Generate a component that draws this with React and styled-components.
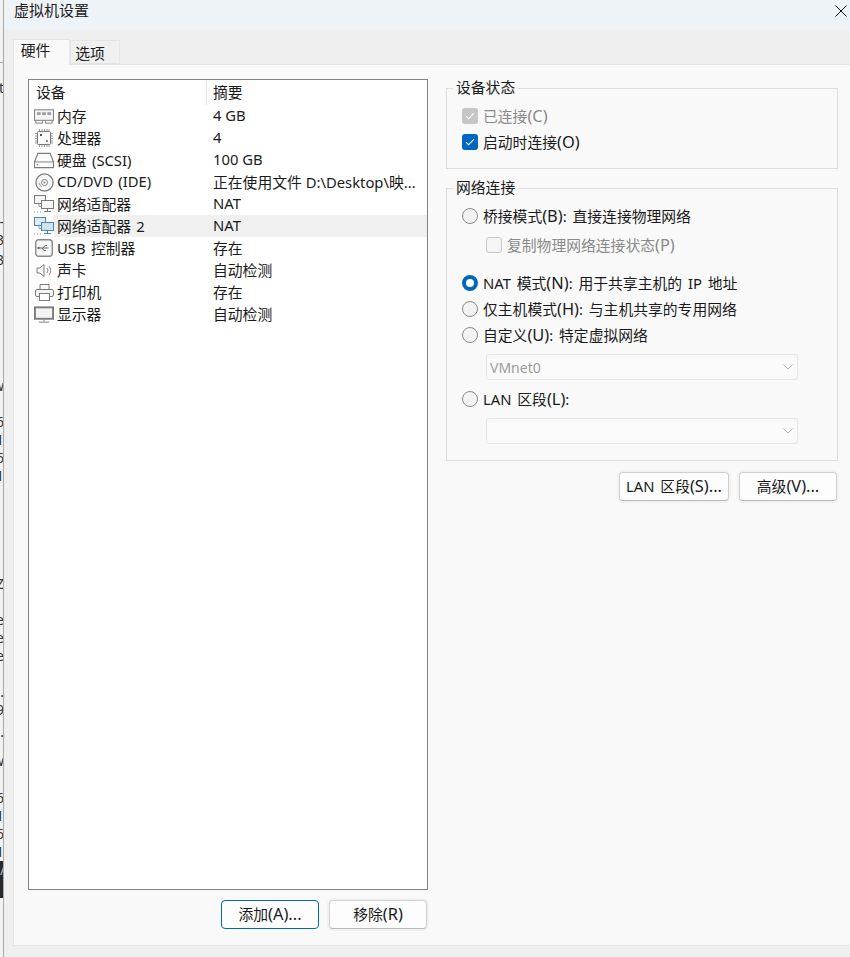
import React from 'react';
import styled, { createGlobalStyle } from 'styled-components';

const GlobalStyle = createGlobalStyle`
  html, body { margin: 0; padding: 0; background: #efefef; }
  body {
    font-family: "Noto Sans", "Noto Sans CJK SC", sans-serif;
    font-size: 14.8px;
    color: #1a1a1a;
  }
`;

const Screen = styled.div`
  display: flex;
  width: 850px;
  height: 957px;
  overflow: hidden;
`;

// sliver of the window behind the dialog
const BehindWindow = styled.div`
  width: 3px;
  flex: none;
  background: #f2f2f2;
  border-right: 1px solid #a9a9a9;
  overflow: hidden;
  display: flex;
  flex-direction: column;
  align-items: flex-end;
`;

const BehindLine = styled.div`
  width: 100%;
  height: 1px;
  flex: none;
  margin-top: 62px;
  background: #a9a9a9;
`;

const BehindChar = styled.div`
  height: 18px;
  flex: none;
  line-height: 18px;
  font-size: 14px;
  color: #333;
  margin-top: ${p => p.$gap || 0}px;
  margin-right: -1px;
  white-space: nowrap;
`;

const BehindDark = styled.div`
  width: 100%;
  height: 37px;
  flex: none;
  background: #25292b;
  color: #bbb;
  font-size: 14px;
  line-height: 18px;
  text-align: right;
`;

const Dialog = styled.div`
  flex: 1;
  min-width: 0;
  display: flex;
  flex-direction: column;
  background: #efefef;
`;

const TitleBar = styled.div`
  height: 30px;
  flex: none;
  display: flex;
  align-items: center;
  justify-content: space-between;
  padding: 0 3px 11px 10px;
  box-sizing: border-box;
  background: #eef3f8;
  font-size: 15px;
  color: #222;
`;

const CloseIcon = styled.svg`
  width: 12px;
  height: 12px;
  margin-top: 3px;
`;

const TabStrip = styled.div`
  height: 34px;
  flex: none;
  display: flex;
  align-items: flex-end;
  padding-left: 9px;
  box-sizing: border-box;
`;

const Tab = styled.div`
  box-sizing: border-box;
  display: flex;
  justify-content: center;
  align-items: flex-start;
  width: ${p => (p.$active ? 57 : 50)}px;
  height: ${p => (p.$active ? 26 : 24)}px;
  margin-bottom: ${p => (p.$active ? -1 : 0)}px;
  background: ${p => (p.$active ? '#f9f9f9' : '#f0f0f0')};
  border: 1px solid #e5e5e5;
  border-bottom: ${p => (p.$active ? 'none' : '1px solid #e5e5e5')};
  position: relative;
  line-height: 20px;
  padding-right: ${p => (p.$active ? 12 : 10)}px;
  padding-top: ${p => (p.$active ? 0 : 2)}px;
`;

const Panel = styled.div`
  flex: 1;
  margin-left: 9px;
  margin-bottom: 11px;
  padding: 14px 12px 0 14px;
  background: #f9f9f9;
  border: 1px solid #e5e5e5;
  border-right: none;
  display: grid;
  grid-template-columns: 400px 392px;
  column-gap: 18px;
  align-content: start;
`;

const LeftColumn = styled.div`
  display: flex;
  flex-direction: column;
`;

const DeviceList = styled.div`
  box-sizing: border-box;
  height: 811px;
  background: #fff;
  border: 1px solid #82838a;
`;

const ListHeader = styled.div`
  display: flex;
  height: 25px;
  align-items: center;
`;

const HeaderCell = styled.div`
  box-sizing: border-box;
  height: 100%;
  display: flex;
  align-items: center;
  padding: 0 0 2px ${p => p.$pad}px;
  width: ${p => p.$width}px;
  border-right: ${p => (p.$divider ? '1px solid #e5e5e5' : 'none')};
`;

const DeviceRow = styled.div`
  display: flex;
  height: 22px;
  align-items: center;
`;

const IconSlot = styled.div`
  width: 25px;
  height: 22px;
  flex: none;
  display: flex;
  align-items: center;
  justify-content: center;
  padding-left: 5px;
  box-sizing: border-box;
`;

const RowBody = styled.div`
  flex: 1;
  height: 100%;
  box-sizing: border-box;
  padding-bottom: 2px;
  display: flex;
  align-items: center;
  background: ${p => (p.$selected ? '#f0f0f0' : 'transparent')};
`;

const DeviceName = styled.div`
  width: 159px;
  padding-left: 3px;
  box-sizing: border-box;
  white-space: pre;
  word-spacing: 1.5px;
`;

const DeviceSummary = styled.div`
  flex: 1;
  min-width: 0;
  white-space: nowrap;
`;

const ButtonRow = styled.div`
  display: flex;
  justify-content: flex-end;
  gap: 10px;
  margin-top: ${p => p.$top}px;
  padding-right: 1px;
`;

const PushButton = styled.button`
  box-sizing: border-box;
  width: ${p => p.$width}px;
  height: 29px;
  padding: 0 0 2px;
  background: #fdfdfd;
  border: 1px solid ${p => (p.$focused ? '#0067c0' : '#d0d0d0')};
  border-bottom-color: ${p => (p.$focused ? '#0067c0' : '#b8b8b8')};
  border-radius: 4px;
  box-shadow: 0 0 0 2px ${p => (p.$focused ? 'transparent' : '#f1f1f1')};
  font: inherit;
  color: #1a1a1a;
  word-spacing: 2px;
  white-space: pre;
`;

const RightColumn = styled.div`
  display: flex;
  flex-direction: column;
  padding-top: 9px;
`;

const Group = styled.div`
  position: relative;
  box-sizing: border-box;
  height: ${p => p.$height}px;
  margin-bottom: ${p => p.$bottom || 0}px;
  padding: 14px 0 0 15px;
  border: 1px solid #dcdcdc;
  display: flex;
  flex-direction: column;
  align-items: flex-start;
`;

const Legend = styled.div`
  position: absolute;
  top: -12px;
  left: 6px;
  padding: 0 3px;
  background: #f9f9f9;
  line-height: 20px;
`;

const OptionRow = styled.div`
  display: flex;
  align-items: center;
  height: 26px;
  gap: 5px;
  margin-top: ${p => p.$top || 0}px;
  margin-left: ${p => p.$indent || 0}px;
  color: ${p => (p.$disabled ? '#8a8a8a' : '#1a1a1a')};
  white-space: pre;
  word-spacing: 2px;
`;

const OptionLabel = styled.span`
  margin-bottom: 2px;
`;

// accelerator such as (C): the original's Latin face runs wider than the CJK one
const Hotkey = styled.span`
  font-size: 16.4px;
`;

const CheckBox = styled.span`
  box-sizing: border-box;
  width: 16px;
  height: 16px;
  flex: none;
  border-radius: 3px;
  display: flex;
  align-items: center;
  justify-content: center;
  background: ${p => (p.$on ? (p.$disabled ? '#c6c6c6' : '#0067c0') : '#f5f5f5')};
  border: ${p => (p.$on ? 'none' : '1px solid #c8c8c8')};
`;

const Radio = styled.span`
  box-sizing: border-box;
  width: 16px;
  height: 16px;
  flex: none;
  border-radius: 50%;
  background: ${p => (p.$on ? '#fff' : '#f3f3f3')};
  border: ${p => (p.$on ? '4.5px solid #0067c0' : '1px solid #8a8a8a')};
`;

const DropDown = styled.div`
  box-sizing: border-box;
  width: 312px;
  height: 26px;
  margin: 6px 0 6px 24px;
  padding: 0 4px 0 3px;
  display: flex;
  align-items: center;
  justify-content: space-between;
  background: #fafafa;
  border: 1px solid #e6e6e6;
  border-radius: 3px;
  color: #9a9a9a;
  font-size: 14px;
`;

const Chevron = styled.svg`
  width: 10px;
  height: 6px;
  margin-left: auto;
`;

const G = '#7a7a7a';

const MemoryIcon = () => (
  <svg width="21" height="16" viewBox="0 0 21 16" fill="none">
    <rect x="0.5" y="1.5" width="20" height="11" fill="#f4f4f4" stroke={G} />
    <rect x="3" y="4" width="4" height="3" fill="#a0a0a0" />
    <rect x="8.5" y="4" width="4" height="3" fill="#a0a0a0" />
    <rect x="14" y="4" width="4" height="3" fill="#a0a0a0" />
    <path d="M2 12.5v3h7v-3M12 12.5v3h7v-3" stroke={G} />
  </svg>
);

const CpuIcon = () => (
  <svg width="18" height="18" viewBox="0 0 18 18" fill="none">
    <rect x="2.5" y="2.5" width="13" height="13" rx="1" fill="#fbfbfb" stroke={G} />
    <path d="M4.5 0v2M7 0v2M9.5 0v2M12 0v2M14 0v2M4.5 16v2M7 16v2M9.5 16v2M12 16v2M14 16v2M0 4.5h2M0 7h2M0 9.5h2M0 12h2M0 14h2M16 4.5h2M16 7h2M16 9.5h2M16 12h2M16 14h2" stroke="#9a9a9a" />
    <rect x="5" y="5" width="2" height="2" fill="#555" />
    <rect x="11" y="11" width="2" height="2" fill="#888" />
  </svg>
);

const DiskIcon = () => (
  <svg width="21" height="17" viewBox="0 0 21 17" fill="none">
    <path d="M4 1h13l3.5 9v6H.5v-6z" fill="#fbfbfb" stroke={G} strokeWidth="1.2" />
    <path d="M0.5 10h20" stroke={G} />
    <path d="M3 13h1.5" stroke="#444" />
  </svg>
);

const DiscIcon = () => (
  <svg width="19" height="19" viewBox="0 0 19 19" fill="none">
    <circle cx="9.5" cy="9.5" r="8.6" fill="#f6f6f6" stroke={G} strokeWidth="1.3" />
    <circle cx="9.5" cy="9.5" r="3" fill="#fff" stroke={G} />
    <circle cx="9.5" cy="9.5" r="1" fill={G} />
    <path d="M4 10a5.5 5.5 0 0 0 3 4" stroke="#999" />
  </svg>
);

const NetIcon = ({ $active }) => {
  const c = $active ? '#4a87b5' : G;
  return (
    <svg width="20" height="18" viewBox="0 0 20 18" fill="none">
      <rect x="0.5" y="0.5" width="11" height="8" fill={$active ? '#dfeaf3' : '#f6f6f6'} stroke={c} />
      <rect x="7.5" y="5.5" width="12" height="8" fill={$active ? '#cfe2f0' : '#f6f6f6'} stroke={c} />
      <path d="M13.5 13.5v3M10 16.5h7" stroke={c} />
      <path d="M5 8.5v3h2M0 17h1M3 17h1M6 17h1" stroke="#999" />
    </svg>
  );
};

const UsbIcon = () => (
  <svg width="18" height="18" viewBox="0 0 18 18" fill="none">
    <rect x="0.7" y="0.7" width="16.6" height="16.6" rx="3" fill="#f8f8f8" stroke="#888" strokeWidth="1.4" />
    <path d="M3.5 9h10M8 9l2-2.5h2M7 9l2 2.5h2" stroke="#666" />
    <circle cx="3.5" cy="9" r="1.2" fill="#666" />
  </svg>
);

const SpeakerIcon = () => (
  <svg width="17" height="15" viewBox="0 0 17 15" fill="none">
    <path d="M1 5h3l4-3.5v12L4 10H1z" fill="#fafafa" stroke={G} />
    <path d="M11 5a4 4 0 0 1 0 5M13 3a7 7 0 0 1 0 9" stroke="#888" />
  </svg>
);

const PrinterIcon = () => (
  <svg width="19" height="17" viewBox="0 0 19 17" fill="none">
    <path d="M5 5V0.5h9V5" fill="#fafafa" stroke={G} />
    <rect x="0.5" y="5.5" width="18" height="7" rx="1.5" fill="#f4f4f4" stroke={G} />
    <rect x="4.5" y="9.5" width="10" height="7" fill="#fff" stroke={G} />
  </svg>
);

const MonitorIcon = () => (
  <svg width="21" height="17" viewBox="0 0 21 17" fill="none">
    <rect x="1" y="1" width="19" height="12" fill="#f3f3f3" stroke="#7c7c7c" strokeWidth="2" />
    <path d="M10.5 14v2M5 16.5h11" stroke="#7c7c7c" />
  </svg>
);

const Tick = () => (
  <svg width="10" height="8" viewBox="0 0 10 8" fill="none">
    <path d="M1 4.2l2.6 2.6L9 1.2" stroke="#fff" strokeWidth="1.1" />
  </svg>
);

const Caret = () => (
  <Chevron viewBox="0 0 10 6" fill="none">
    <path d="M0.5 0.5L5 5l4.5-4.5" stroke="#b5b5b5" />
  </Chevron>
);

// wraps (X) and (X)... runs so they take the wider Latin size
const withHotkey = text =>
  text.split(/(\([A-Z]\)(?:\.\.\.)?)/).map((part, i) =>
    i % 2 ? <Hotkey key={i}>{part}</Hotkey> : part
  );

const Label = ({ children }) => <OptionLabel>{withHotkey(children)}</OptionLabel>;

const devices = [
  { icon: <MemoryIcon />, name: '内存', summary: '4 GB' },
  { icon: <CpuIcon />, name: '处理器', summary: '4' },
  { icon: <DiskIcon />, name: '硬盘 (SCSI)', summary: '100 GB' },
  { icon: <DiscIcon />, name: 'CD/DVD (IDE)', summary: '正在使用文件 D:\\Desktop\\映...' },
  { icon: <NetIcon />, name: '网络适配器', summary: 'NAT' },
  { icon: <NetIcon $active />, name: '网络适配器 2', summary: 'NAT', selected: true },
  { icon: <UsbIcon />, name: 'USB 控制器', summary: '存在' },
  { icon: <SpeakerIcon />, name: '声卡', summary: '自动检测' },
  { icon: <PrinterIcon />, name: '打印机', summary: '存在' },
  { icon: <MonitorIcon />, name: '显示器', summary: '自动检测' },
];

const behind = [
  ['t', 16], ['-', 116], ['3', 0], ['3', 2], ['w', 108], ['6', 18], ['1', 0], ['6', 0], ['1', 0],
  ['Z', 90], ['e', 18], ['e', 0], ['e', 0], ['.', 18], ['9', 0], ['.', 4], ['w', 11], ['6', 19], ['1', 0], ['6', 0], ['1', 0],
];

export default function App() {
  return (
    <Screen>
      <GlobalStyle />
      <BehindWindow>
        <BehindLine />
        {behind.map(([c, gap], i) => (
          <BehindChar key={i} $gap={gap}>{c}</BehindChar>
        ))}
        <BehindDark>/</BehindDark>
      </BehindWindow>
      <Dialog>
        <TitleBar>
          <span>虚拟机设置</span>
          <CloseIcon viewBox="0 0 12 12" fill="none">
            <path d="M0.5 0.5l11 11M11.5 0.5l-11 11" stroke="#111" />
          </CloseIcon>
        </TitleBar>
        <TabStrip>
          <Tab $active>硬件</Tab>
          <Tab>选项</Tab>
        </TabStrip>
        <Panel>
          <LeftColumn>
            <DeviceList>
              <ListHeader>
                <HeaderCell $width={178} $pad={7} $divider>设备</HeaderCell>
                <HeaderCell $width={200} $pad={6}>摘要</HeaderCell>
              </ListHeader>
              {devices.map(d => (
                <DeviceRow key={d.name}>
                  <IconSlot>{d.icon}</IconSlot>
                  <RowBody $selected={d.selected}>
                    <DeviceName>{d.name}</DeviceName>
                    <DeviceSummary>{d.summary}</DeviceSummary>
                  </RowBody>
                </DeviceRow>
              ))}
            </DeviceList>
            <ButtonRow $top={10}>
              <PushButton $width={98} $focused>{withHotkey('添加(A)...')}</PushButton>
              <PushButton $width={98}>{withHotkey('移除(R)')}</PushButton>
            </ButtonRow>
          </LeftColumn>
          <RightColumn>
            <Group $height={81} $bottom={19}>
              <Legend>设备状态</Legend>
              <OptionRow $disabled>
                <CheckBox $on $disabled><Tick /></CheckBox><Label>已连接(C)</Label>
              </OptionRow>
              <OptionRow>
                <CheckBox $on><Tick /></CheckBox><Label>启动时连接(O)</Label>
              </OptionRow>
            </Group>
            <Group $height={273}>
              <Legend>网络连接</Legend>
              <OptionRow><Radio /><Label>桥接模式(B): 直接连接物理网络</Label></OptionRow>
              <OptionRow $top={3} $indent={24} $disabled><CheckBox /><Label>复制物理网络连接状态(P)</Label></OptionRow>
              <OptionRow $top={12}><Radio $on /><Label>NAT 模式(N): 用于共享主机的 IP 地址</Label></OptionRow>
              <OptionRow><Radio /><Label>仅主机模式(H): 与主机共享的专用网络</Label></OptionRow>
              <OptionRow><Radio /><Label>自定义(U): 特定虚拟网络</Label></OptionRow>
              <DropDown>VMnet0<Caret /></DropDown>
              <OptionRow><Radio /><Label>LAN 区段(L):</Label></OptionRow>
              <DropDown><Caret /></DropDown>
            </Group>
            <ButtonRow $top={11}>
              <PushButton $width={110}>{withHotkey('LAN 区段(S)...')}</PushButton>
              <PushButton $width={98}>{withHotkey('高级(V)...')}</PushButton>
            </ButtonRow>
          </RightColumn>
        </Panel>
      </Dialog>
    </Screen>
  );
}
